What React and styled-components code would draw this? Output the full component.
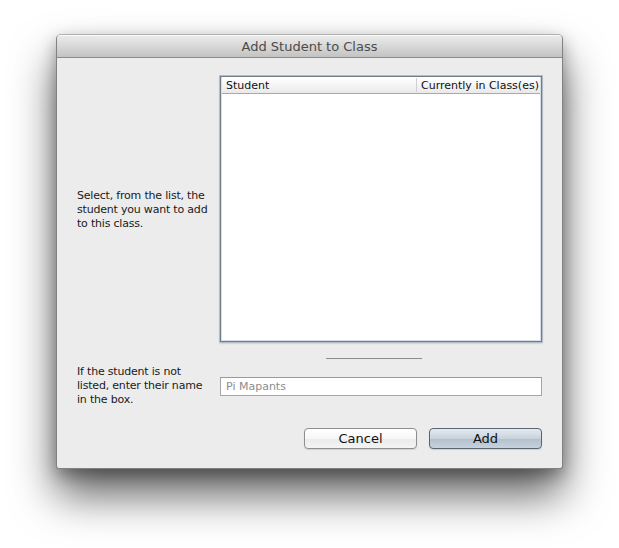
import React from 'react'
import styled, { createGlobalStyle } from 'styled-components'

const GlobalStyle = createGlobalStyle`
    html, body {
        margin: 0;
        padding: 0;
        background: #ffffff;
        font-family: "DejaVu Sans", "Liberation Sans", sans-serif;
    }
    #root {
        width: 619px;
        height: 548px;
        overflow: hidden;
        padding-top: 34px;
        box-sizing: border-box;
    }
`

const Window = styled.div`
    width: 507px;
    height: 435px;
    margin: 0 auto;
    box-sizing: border-box;
    display: flex;
    flex-direction: column;
    background: #ececec;
    border: 1px solid rgba(0,0,0,0.45);
    border-top-color: rgba(0,0,0,0.25);
    border-radius: 5px 5px 3px 3px;
    box-shadow: 0 26px 44px rgba(0,0,0,0.62), 0 6px 16px rgba(0,0,0,0.3);
    overflow: hidden;
`

const TitleBar = styled.div`
    height: 22px;
    flex: none;
    display: flex;
    align-items: center;
    justify-content: center;
    background: linear-gradient(to bottom, #ececec 0%, #dcdcdc 40%, #c3c3c3 100%);
    border-bottom: 1px solid #8a8a8a;
    box-shadow: inset 0 1px 0 rgba(255,255,255,0.7);
    color: #4b4b4b;
    font-size: 13px;
`

const Body = styled.div`
    flex: 1;
    display: grid;
    grid-template-columns: 142px 324px;
    grid-template-rows: 268px 34px 18px auto;
    padding: 17px 19px 19px 20px;
`

const Label = styled.p`
    margin: 0;
    align-self: center;
    font-size: 11px;
    line-height: 14px;
    letter-spacing: -0.2px;
    color: #1a1a1a;
    padding: ${p => p.lower ? '2px' : '0'} 8px 0 0;
`

const Table = styled.div`
    box-sizing: border-box;
    border: 1px solid #6f7d8a;
    box-shadow: 0 0 0 1px #b3bec8, 0 1px 2px rgba(0,0,0,0.3), inset 0 0 0 1px #d8dee4;
    background: #ffffff;
    display: flex;
    flex-direction: column;
    margin: 1px;
`

const TableHead = styled.div`
    display: flex;
    height: 16px;
    margin: 0 1px;
    background: linear-gradient(to bottom, #ffffff 0%, #f3f3f3 60%, #e9e9e9 100%);
    border-bottom: 1px solid #a9a9a9;
    font-size: 11px;
    color: #111;
`

const HeadCell = styled.div`
    flex: ${p => p.grow || 'none'};
    width: ${p => p.width || 'auto'};
    display: flex;
    align-items: center;
    padding-left: 4px;
    border-left: ${p => p.divided ? '1px solid #cfcfcf' : 'none'};
    margin: ${p => p.divided ? '1px 0' : '0'};
    white-space: nowrap;
`

const SplitRow = styled.div`
    grid-column: 2;
    display: flex;
    align-items: flex-start;
    padding: 15px 0 0 107px;
`

const Splitter = styled.div`
    width: 96px;
    height: 1px;
    background: #8c8c8c;
`

const NameInput = styled.input`
    box-sizing: border-box;
    width: 322px;
    height: 19px;
    margin: 0 0 0 1px;
    padding: 0 5px;
    border: 1px solid #a6a6a6;
    border-top-color: #9a9a9a;
    background: #ffffff;
    font-family: "DejaVu Sans", "Liberation Sans", sans-serif;
    font-size: 11px;
    color: #222;
    outline: none;
    align-self: center;
    &::placeholder { color: #8d8d8d; }
`

const ButtonRow = styled.div`
    grid-column: 1 / span 2;
    display: flex;
    justify-content: flex-end;
    align-items: flex-end;
    gap: 12px;
    padding-right: 1px;
`

const Button = styled.button`
    width: 113px;
    height: 21px;
    box-sizing: border-box;
    border-radius: 4px;
    border: 1px solid ${p => p.primary ? '#5b6570' : '#8e8e8e'};
    background: ${p => p.primary
        ? 'linear-gradient(to bottom, #e4e9ef 0%, #c9d3dd 50%, #b3c0cd 52%, #c7d2dd 100%)'
        : 'linear-gradient(to bottom, #ffffff 0%, #f7f7f7 50%, #ebebeb 52%, #f4f4f4 100%)'};
    box-shadow: 0 1px 1px rgba(0,0,0,0.12);
    font-family: "DejaVu Sans", "Liberation Sans", sans-serif;
    font-size: 13px;
    color: #111;
    padding: 0;
`

export default function App() {
    return (
        <>
            <GlobalStyle />
            <Window>
                <TitleBar>Add Student to Class</TitleBar>
                <Body>
                    <Label lower>Select, from the list, the student you want to add to this class.</Label>
                    <Table>
                        <TableHead>
                            <HeadCell grow="1">Student</HeadCell>
                            <HeadCell divided width="119px">Currently in Class(es)</HeadCell>
                        </TableHead>
                    </Table>
                    <SplitRow><Splitter /></SplitRow>
                    <Label>If the student is not listed, enter their name in the box.</Label>
                    <NameInput placeholder="Pi Mapants" />
                    <ButtonRow>
                        <Button>Cancel</Button>
                        <Button primary>Add</Button>
                    </ButtonRow>
                </Body>
            </Window>
        </>
    )
}
